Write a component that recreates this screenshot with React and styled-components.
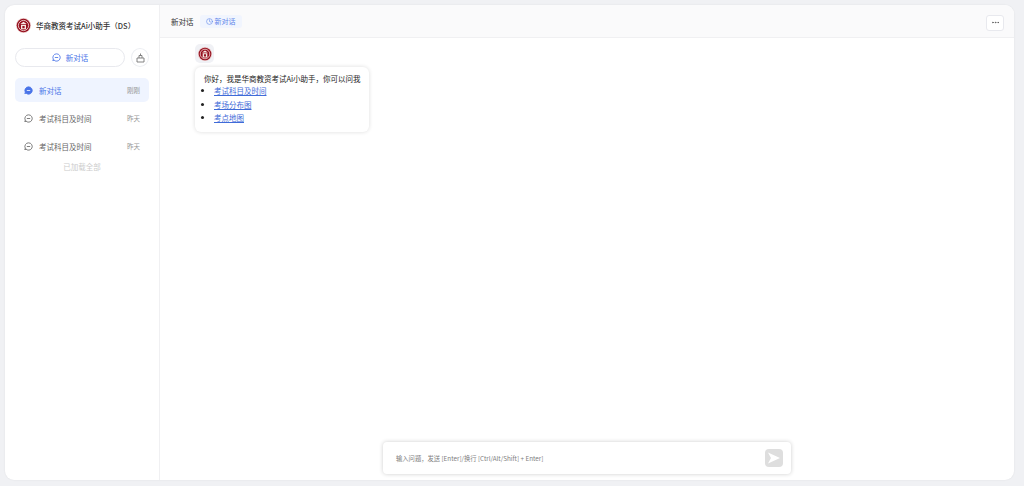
import React from "react";
import styled, { createGlobalStyle } from "styled-components";
import { Ellipsis, Clock } from "lucide-react";

const GlobalStyle = createGlobalStyle`
  html, body {
    margin: 0;
    height: 100%;
    background: #f0f1f4;
    font-family: "Noto Sans CJK SC", "Liberation Sans", sans-serif;
  }
  #root { height: 100%; }
  * { box-sizing: border-box; }
`;

const Page = styled.div`
  height: 486px;
  padding: 5px 10px 6px 5px;
`;

const Card = styled.div`
  display: flex;
  height: 100%;
  background: #fff;
  border-radius: 9px;
  overflow: hidden;
  box-shadow: 0 0 2px rgba(0, 0, 0, 0.08);
`;

const Sidebar = styled.aside`
  display: flex;
  flex-direction: column;
  width: 155px;
  flex-shrink: 0;
  padding: 0 10px;
  border-right: 1px solid #f0f0f2;
`;

const Brand = styled.div`
  display: flex;
  align-items: center;
  gap: 5px;
  height: 40px;
  padding-left: 1px;
  margin-bottom: 3px;
  font-size: 7.5px;
  font-weight: 500;
  color: #333;
  white-space: nowrap;
`;

const NewRow = styled.div`
  display: flex;
  gap: 6px;
  margin-bottom: 11px;
`;

const NewButton = styled.button`
  display: flex;
  align-items: center;
  justify-content: center;
  gap: 5px;
  width: 110px;
  height: 19px;
  padding: 0;
  background: #fff;
  border: 1px solid #e8e9ee;
  border-radius: 10px;
  font: inherit;
  font-size: 7.5px;
  color: #4a74e8;
`;

const RoundButton = styled.button`
  display: flex;
  align-items: center;
  justify-content: center;
  width: 18px;
  height: 19px;
  padding: 0;
  background: #fff;
  border: 1px solid #eceef2;
  border-radius: 50%;
  color: #777;
`;

const Item = styled.div`
  display: flex;
  align-items: center;
  gap: 6px;
  height: 24px;
  margin-bottom: 4px;
  padding: 0 9px 0 9px;
  border-radius: 5px;
  background: ${(p) => (p.$active ? "#eff4ff" : "transparent")};
  color: ${(p) => (p.$active ? "#4a74e8" : "#666")};
  font-size: 7.5px;
  white-space: nowrap;
`;

const ItemName = styled.span`
  flex: 1;
`;

const ItemTime = styled.span`
  color: #999;
  font-size: 6.5px;
`;

const Loaded = styled.div`
  margin-top: -1px;
  text-align: center;
  font-size: 7.5px;
  color: #ccc;
`;

const Main = styled.main`
  display: flex;
  flex-direction: column;
  flex: 1;
  min-width: 0;
`;

const Header = styled.header`
  display: flex;
  align-items: center;
  gap: 6px;
  height: 33px;
  flex-shrink: 0;
  padding: 0 10px 0 11px;
  background: #fafafb;
  border-bottom: 1px solid #f0f0f2;
`;

const HeaderTitle = styled.span`
  font-size: 7.5px;
  color: #333;
`;

const Tag = styled.span`
  display: flex;
  align-items: center;
  gap: 2px;
  height: 13px;
  padding: 0 6px;
  border-radius: 3px;
  background: #f1f5fe;
  color: #5f86ea;
  font-size: 7px;
`;

const MoreButton = styled.button`
  display: flex;
  align-items: center;
  justify-content: center;
  width: 18px;
  height: 16px;
  margin: 3px 0 0 auto;
  padding: 0;
  background: #fff;
  border: 1px solid #e8e9ee;
  border-radius: 3px;
  color: #555;
`;

const Conversation = styled.section`
  flex: 1;
  min-height: 0;
  padding: 6px 0 0 35px;
`;

const AvatarBox = styled.div`
  display: flex;
  align-items: center;
  justify-content: center;
  width: 19px;
  height: 19px;
  margin-bottom: 4px;
  border-radius: 5px;
  background: #f0f1f5;
`;

const Bubble = styled.div`
  width: 174px;
  height: 65px;
  padding: 5px 9px;
  border-radius: 6px;
  background: #fff;
  box-shadow: 0 0 4px rgba(0, 0, 0, 0.14);
  font-size: 7.5px;
  color: #222;
  white-space: nowrap;
`;

const Greeting = styled.div`
  height: 11px;
  line-height: 13px;
`;

const Links = styled.ul`
  margin: 1px 0 0;
  padding: 0 0 0 10px;
`;

const LinkItem = styled.li`
  height: 13.5px;
  line-height: 13.5px;
`;

const DocLink = styled.a`
  color: #3f6bd8;
  text-decoration: underline;
`;

const Composer = styled.div`
  display: flex;
  align-items: center;
  justify-content: space-between;
  align-self: center;
  width: 408px;
  height: 32px;
  margin-bottom: 6px;
  padding: 0 8px 0 13px;
  background: #fff;
  border-radius: 4px;
  box-shadow: 0 0 4px rgba(0, 0, 0, 0.2);
  font-size: 6.3px;
  color: #808080;
`;

const SendButton = styled.button`
  display: flex;
  align-items: center;
  justify-content: center;
  width: 18px;
  height: 18px;
  padding: 0;
  border: 0;
  border-radius: 4px;
  background: #dedede;
`;

const Logo = ({ size }) => (
  <svg width={size} height={size} viewBox="0 0 24 24">
    <circle cx="12" cy="12" r="12" fill="#e8c4c4" />
    <circle cx="12" cy="12" r="10.8" fill="#96101f" />
    <circle cx="12" cy="12" r="8.2" fill="none" stroke="#f6e4e0" strokeWidth="1.3" />
    <path
      d="M12 6 L17 9.5 H7 Z M8 10.8 H16 V18 H8 Z M10.2 12.6 V16.2 H13.8 V12.6 Z"
      fill="#f7e9e4"
      fillRule="evenodd"
    />
  </svg>
);

// speech circle with a dash, used for new chat and the history rows
const ChatIcon = ({ filled }) => (
  <svg width="9" height="9" viewBox="0 0 16 16">
    <path
      d="M8 1.5 A6.5 6.5 0 1 1 3 12 L1.8 14.2 L2.2 10.8 A6.5 6.5 0 0 1 8 1.5 Z"
      fill={filled ? "currentColor" : "none"}
      stroke="currentColor"
      strokeWidth="1.5"
    />
    <path
      d="M5 8 H11"
      stroke={filled ? "#eff4ff" : "currentColor"}
      strokeWidth="1.5"
    />
  </svg>
);

const ShareIcon = () => (
  <svg width="9" height="10" viewBox="0 0 18 20">
    <path
      d="M2 10 H16 V18 H2 Z M6 10 V5 H12 V10 M9 5 V1"
      fill="none"
      stroke="currentColor"
      strokeWidth="1.8"
    />
  </svg>
);

const history = [
  { name: "新对话", time: "刚刚", active: true },
  { name: "考试科目及时间", time: "昨天" },
  { name: "考试科目及时间", time: "昨天" },
];

const links = ["考试科目及时间", "考场分布图", "考点地图"];

export default function App() {
  return (
    <Page>
      <GlobalStyle />
      <Card>
        <Sidebar>
          <Brand>
            <Logo size={15} />
            华商教资考试Ai小助手（DS）
          </Brand>
          <NewRow>
            <NewButton>
              <ChatIcon />
              新对话
            </NewButton>
            <RoundButton>
              <ShareIcon />
            </RoundButton>
          </NewRow>
          {history.map((item, i) => (
            <Item key={i} $active={item.active}>
              <ChatIcon filled={item.active} />
              <ItemName>{item.name}</ItemName>
              <ItemTime>{item.time}</ItemTime>
            </Item>
          ))}
          <Loaded>已加载全部</Loaded>
        </Sidebar>
        <Main>
          <Header>
            <HeaderTitle>新对话</HeaderTitle>
            <Tag>
              <Clock size={7} />
              新对话
            </Tag>
            <MoreButton>
              <Ellipsis size={9} />
            </MoreButton>
          </Header>
          <Conversation>
            <AvatarBox>
              <Logo size={14} />
            </AvatarBox>
            <Bubble>
              <Greeting>你好，我是华商教资考试Ai小助手，你可以问我</Greeting>
              <Links>
                {links.map((text) => (
                  <LinkItem key={text}>
                    <DocLink href="#">{text}</DocLink>
                  </LinkItem>
                ))}
              </Links>
            </Bubble>
          </Conversation>
          <Composer>
            输入问题，发送 [Enter]/换行 [Ctrl/Alt/Shift] + Enter]
            <SendButton>
              <svg width="14" height="12" viewBox="0 0 14 12">
                <path d="M1 0.5 L13 6 L1 11.5 L4 6 Z" fill="#fff" />
              </svg>
            </SendButton>
          </Composer>
        </Main>
      </Card>
    </Page>
  );
}
